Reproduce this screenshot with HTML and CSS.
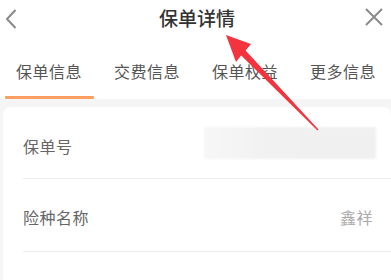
FILE: index.html
```html
<!DOCTYPE html>
<html lang="zh">
<head>
<meta charset="utf-8">
<link rel="stylesheet" href="styles.css">
</head>
<body>
<div class="page">
  <header class="header">
    <svg class="icon-back" width="14" height="22" viewBox="0 0 14 22"><path d="M11.5 2 L3 11 L11.5 20" fill="none" stroke="#8a8a8a" stroke-width="2"/></svg>
    <h1 class="title">保单详情</h1>
    <svg class="icon-close" width="20" height="20" viewBox="0 0 20 20"><path d="M2 2 L18 18 M18 2 L2 18" fill="none" stroke="#8a8a8a" stroke-width="2"/></svg>
  </header>
  <nav class="tabs">
    <div class="tab active"><span class="tab-label">保单信息</span><span class="tab-bar"></span></div>
    <div class="tab"><span class="tab-label">交费信息</span><span class="tab-bar"></span></div>
    <div class="tab"><span class="tab-label">保单权益</span><span class="tab-bar"></span></div>
    <div class="tab"><span class="tab-label">更多信息</span><span class="tab-bar"></span></div>
  </nav>
  <main class="content">
    <section class="card">
      <div class="row">
        <span class="label">保单号</span>
        <span class="blurred"></span>
      </div>
      <div class="row">
        <span class="label">险种名称</span>
        <span class="value">鑫祥</span>
      </div>
    </section>
  </main>
  <svg class="arrow" width="391" height="280" viewBox="0 0 391 280">
    <polygon points="226,35 251,44 245.6,50.6 318.5,129.5 317.5,130.5 241.2,55.4 236,62" fill="#f3333d"/>
  </svg>
</div>
</body>
</html>
```
FILE: styles.css
```css
* { box-sizing: border-box; margin: 0; padding: 0; }
html, body { width: 391px; height: 280px; overflow: hidden; background: #ffffff; }
body { font-family: "Noto Sans CJK SC", "Noto Sans", sans-serif; }
.page { position: relative; width: 391px; height: 280px; display: flex; flex-direction: column; overflow: hidden; }
.header { flex: 0 0 36px; height: 36px; display: flex; align-items: center; justify-content: space-between; padding: 0 7px 0 4px; }
.icon-back { display: block; margin-top: 1px; }
.icon-close { display: block; margin-top: -2px; }
.title { font-size: 19px; font-weight: 500; color: #333333; line-height: 24px; margin-left: 12px; margin-top: -1px; }
.tabs { flex: 0 0 63px; height: 63px; display: grid; grid-template-columns: repeat(4, 98px); }
.tab { display: flex; flex-direction: column; align-items: center; }
.tab-label { font-size: 16px; line-height: 24px; color: #555555; margin-top: 23px; letter-spacing: 0.5px; }
.tab-bar { margin-top: auto; width: 89px; height: 3px; border-radius: 1px; }
.tab.active .tab-bar { background: #ff9f63; }
.content { flex: 1 1 auto; min-height: 0; background: #f5f5f5; padding: 8px 0 0 3px; overflow: hidden; }
.card { background: #ffffff; border-radius: 8px 8px 0 0; height: 200px; padding-left: 20px; }
.row { height: 73px; display: flex; align-items: center; justify-content: space-between; border-bottom: 1px solid #ececec; padding-right: 18px; }
.row:first-child { height: 72px; padding-top: 6px; }
.row:nth-child(2) { padding-top: 3px; }
.label { font-size: 16px; color: #666666; line-height: 24px; letter-spacing: 0.5px; }
.value { font-size: 16px; color: #aaaaaa; line-height: 24px; letter-spacing: 0.5px; }
.blurred { width: 172px; height: 32px; background: linear-gradient(90deg, #f7f7f7 0%, #f1f1f1 40%, #f0f0f0 100%); filter: blur(1px); margin-top: -6px; margin-right: -3px; }
.arrow { position: absolute; left: 0; top: 0; pointer-events: none; }
```
